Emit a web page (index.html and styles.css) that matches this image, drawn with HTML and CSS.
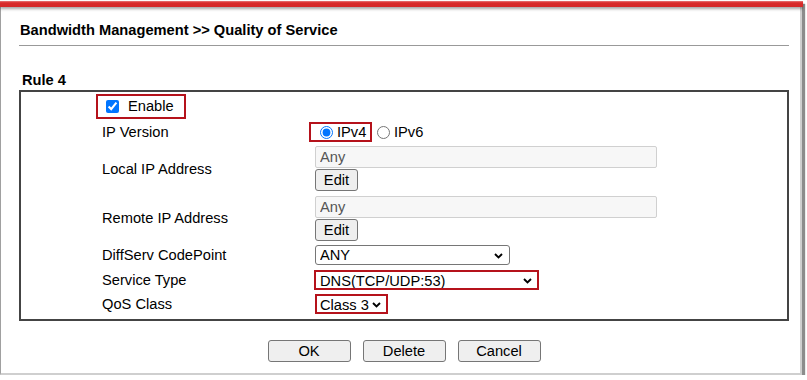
FILE: index.html
```html
<!DOCTYPE html>
<html>
<head>
<meta charset="utf-8">
<title>Quality of Service</title>
<link rel="stylesheet" href="styles.css">
</head>
<body>
<div class="frame">
  <div class="topbar"></div>
  <div class="content">
    <div class="title">Bandwidth Management &gt;&gt; Quality of Service</div>
    <div class="rule-line"></div>
    <div class="rule-title">Rule 4</div>
    <div class="rule-box">
      <div class="row row-enable">
        <label class="hl enable-box"><input type="checkbox" class="chk" checked><span>Enable</span></label>
      </div>
      <div class="row row-ipver">
        <div class="lbl">IP Version</div>
        <div class="ctl ctl-radio">
          <label class="hl ipv4-box"><input type="radio" name="ipv" class="rad" checked><span>IPv4</span></label>
          <label class="ipv6"><input type="radio" name="ipv" class="rad"><span>IPv6</span></label>
        </div>
      </div>
      <div class="row row-addr row-local">
        <div class="lbl">Local IP Address</div>
        <div class="ctl ctl-stack">
          <input type="text" class="addr" value="Any" readonly>
          <button class="btn-edit">Edit</button>
        </div>
      </div>
      <div class="row row-addr row-remote">
        <div class="lbl">Remote IP Address</div>
        <div class="ctl ctl-stack">
          <input type="text" class="addr" value="Any" readonly>
          <button class="btn-edit">Edit</button>
        </div>
      </div>
      <div class="row row-diff">
        <div class="lbl">DiffServ CodePoint</div>
        <div class="ctl">
          <span class="selwrap">
            <select class="sel sel-diff"><option>ANY</option></select>
            <svg class="chev" width="9" height="6" viewBox="0 0 9 6"><path d="M1 1 L4.5 4.5 L8 1" fill="none" stroke="#000" stroke-width="1.9"/></svg>
          </span>
        </div>
      </div>
      <div class="row row-svc">
        <div class="lbl">Service Type</div>
        <div class="ctl">
          <span class="selwrap wrap-svc">
            <select class="sel sel-svc"><option>DNS(TCP/UDP:53)</option></select>
            <svg class="chev" width="9" height="6" viewBox="0 0 9 6"><path d="M1 1 L4.5 4.5 L8 1" fill="none" stroke="#000" stroke-width="1.9"/></svg>
          </span>
        </div>
      </div>
      <div class="row row-qos">
        <div class="lbl">QoS Class</div>
        <div class="ctl">
          <span class="selwrap">
            <select class="sel sel-qos"><option>Class 3</option></select>
            <svg class="chev" width="9" height="6" viewBox="0 0 9 6"><path d="M1 1 L4.5 4.5 L8 1" fill="none" stroke="#000" stroke-width="1.9"/></svg>
          </span>
        </div>
      </div>
    </div>
    <div class="actions">
      <button class="btn">OK</button>
      <button class="btn">Delete</button>
      <button class="btn">Cancel</button>
    </div>
  </div>
</div>
</body>
</html>
```
FILE: styles.css
```css
html, body {
  margin: 0;
  padding: 0;
  background: #ffffff;
}
body {
  font-family: "Liberation Sans", Arial, sans-serif;
  font-size: 14.67px;
  color: #000;
}
.frame {
  margin-top: 1px;
  width: 802px;
  height: 374px;
  box-sizing: border-box;
  border-left: 1px solid #a0a0a0;
  border-right: 2px solid #cfcfcf;
  border-bottom: 2px solid #cfcfcf;
  box-shadow: 3px 3px 1px #8c8c8c;
  background: #fff;
}
.topbar {
  height: 6px;
  margin-left: -1px;
  margin-right: -3px;
  background: linear-gradient(#e77a7a 0, #d92b2b 30%, #d42828 100%);
  box-shadow: 0 2px 3px rgba(0, 0, 0, 0.35);
}
.content {
  padding-left: 18px;
  padding-right: 11px;
}
.title {
  margin-top: 15px;
  padding-left: 1px;
  font-weight: bold;
  line-height: 16px;
}
.rule-line {
  margin-top: 7px;
  height: 1px;
  background: #999;
}
.rule-title {
  margin-top: 26px;
  padding-left: 3px;
  font-weight: bold;
  line-height: 16px;
}
.rule-box {
  margin-top: 2px;
  border: 2px solid #444;
  padding: 0 0 3px 81px;
  display: grid;
  grid-template-columns: 213px 1fr;
  grid-template-rows: 28px 24px 49px 50px 24px 25px 24px;
}
.row {
  display: contents;
}
.lbl {
  align-self: center;
  line-height: 16px;
}
.ctl {
  align-self: center;
  display: flex;
  align-items: center;
}
.row-enable .enable-box {
  grid-column: 1 / 3;
  align-self: center;
  justify-self: start;
  margin-left: -6px;
}
.hl {
  display: inline-flex;
  align-items: center;
  border: 2px solid #b5121b;
  box-sizing: border-box;
}
.enable-box {
  width: 90px;
  height: 25px;
  padding-left: 8px;
}
.chk {
  margin: 0 9px 0 0;
  width: 13px;
  height: 13px;
}
.ctl-radio {
  margin-left: -6px;
}
.ipv4-box {
  width: 63px;
  height: 20px;
  padding-left: 9px;
}
.rad {
  margin: 0 4px 0 0;
  width: 13px;
  height: 13px;
}
.ipv6 {
  display: inline-flex;
  align-items: center;
  margin-left: 5px;
}
.ctl-stack {
  flex-direction: column;
  align-items: flex-start;
  gap: 1px;
}
.addr {
  width: 342px;
  height: 22px;
  box-sizing: border-box;
  margin: 0;
  border: 1px solid #d0d0d0;
  border-radius: 2px;
  background: #f7f7f7;
  color: #555;
  padding: 0 4px;
  font-family: "Liberation Sans", Arial, sans-serif;
  font-size: 14.67px;
  outline: none;
}
.btn-edit {
  width: 43px;
  height: 22px;
  box-sizing: border-box;
  margin: 0;
  padding: 0;
  border: 1px solid #767676;
  border-radius: 3px;
  background: #efefef;
  color: #000;
  font-family: "Liberation Sans", Arial, sans-serif;
  font-size: 14.67px;
}
.row-remote .ctl-stack {
  padding-top: 1px;
}
.selwrap {
  position: relative;
  display: inline-flex;
}
.wrap-svc {
  margin-left: -1px;
}
.chev {
  position: absolute;
  right: 7px;
  top: 50%;
  margin-top: -2px;
  pointer-events: none;
}
.sel {
  -webkit-appearance: none;
  appearance: none;
  height: 20px;
  box-sizing: border-box;
  margin: 0;
  border: 1px solid #767676;
  border-radius: 3px;
  background-color: #fff;
  color: #000;
  font-family: "Liberation Sans", Arial, sans-serif;
  font-size: 14.67px;
  line-height: 18px;
  padding: 0 20px 0 4px;
}
.sel-diff {
  width: 195px;
}
.sel-svc {
  width: 225px;
  border: 2px solid #b5121b;
  border-radius: 0;
  padding-left: 4px;
}
.sel-qos {
  width: 73px;
  border: 2px solid #b5121b;
  border-radius: 0;
  padding-left: 3px;
  padding-right: 14px;
}
.actions {
  margin-top: 19px;
  display: flex;
  justify-content: center;
  gap: 12px;
}
.btn {
  width: 83px;
  height: 22px;
  box-sizing: border-box;
  margin: 0;
  padding: 0;
  border: 1px solid #767676;
  border-radius: 3px;
  background: #efefef;
  color: #000;
  font-family: "Liberation Sans", Arial, sans-serif;
  font-size: 14.67px;
}
```
